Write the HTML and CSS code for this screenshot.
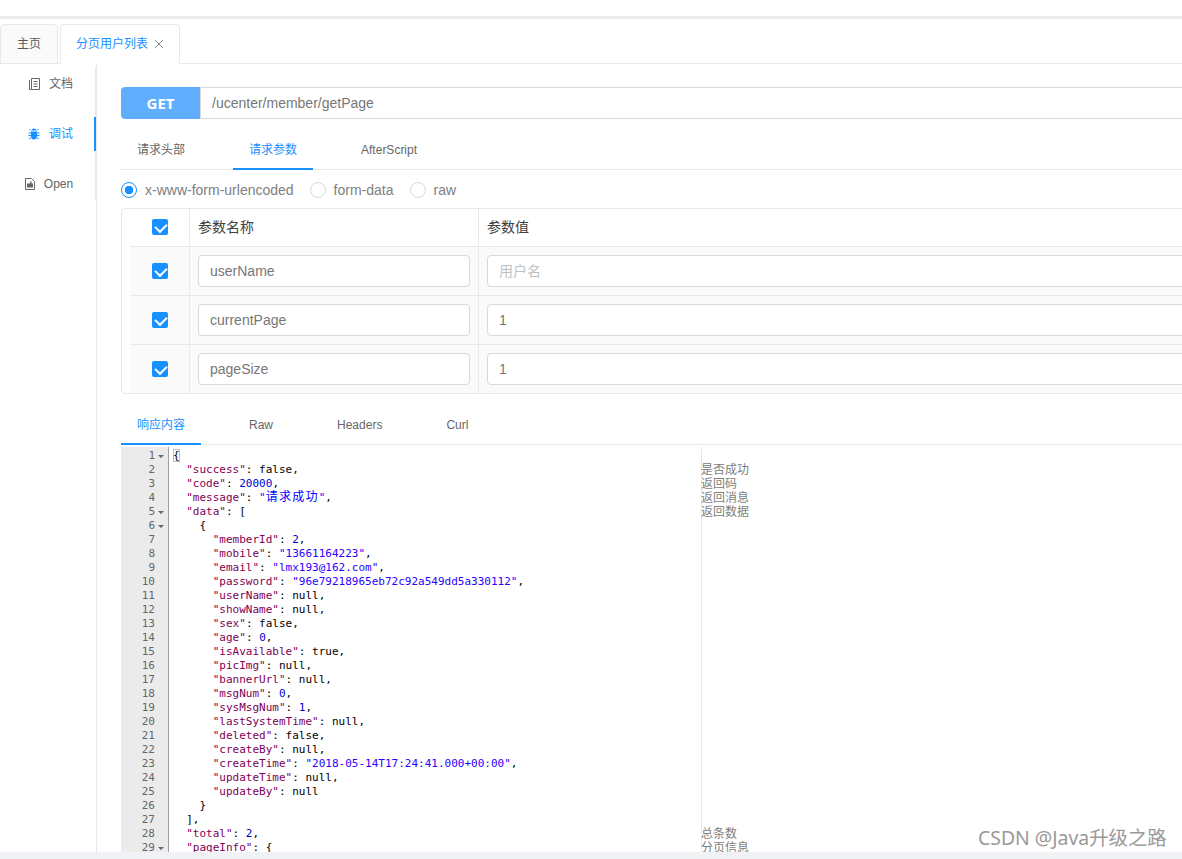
FILE: index.html
```html
<!DOCTYPE html>
<html lang="en">
<head>
  <meta charset="UTF-8">
  <title>分页用户列表</title>
  <link rel="stylesheet" href="styles.css">
</head>
<body>
  <div class="top-strip"></div>

  <div class="page-tabs">
    <div class="page-tab">主页</div>
    <div class="page-tab page-tab-active">分页用户列表
      <svg class="close-icon" width="10" height="10" viewBox="0 0 10 10"><path d="M1 1l8 8M9 1l-8 8" stroke="#8c8c8c" fill="none"/></svg>
    </div>
  </div>

  <div class="main">
    <div class="side">
      <div class="side-menu">
        <div class="side-item">
          <svg width="11" height="12" viewBox="0 0 11 12"><path d="M2.500.5h8v11h-8zM.5 2v9.500h2M4.500 3.500h4M4.500 6h4M4.500 8.500h4" stroke="#666" fill="none"/></svg>
          文档
        </div>
        <div class="side-item side-item-active">
          <svg width="12" height="12" viewBox="0 0 12 12"><path d="M3.500 2.500a2.500 2 0 0 1 5 0zM3 3.500h6V8a3 3.500 0 0 1-6 0z" fill="#1890ff"/><path d="M3 5H.5M3 7.500H.5M3 9.500l-2 1.500M9 5h2.500M9 7.500h2.500M9 9.500l2 1.500M3 2.500L1.500 1M9 2.500L10.500 1" stroke="#1890ff" fill="none"/></svg>
          调试
        </div>
        <div class="side-item side-item-open">
          <svg width="10" height="12" viewBox="0 0 10 12"><path d="M.5.5h6l3 3v8h-9z" stroke="#666" fill="none"/><path d="M2 5.500h3v-2h1.500v2H8v4H2z" fill="#666"/></svg>
          Open
        </div>
      </div>
    </div>

    <div class="content">
      <div class="url-bar">
        <div class="method">GET</div>
        <div class="url">/ucenter/member/getPage</div>
      </div>

      <div class="tabs">
        <div class="tab">请求头部</div>
        <div class="tab tab-active">请求参数</div>
        <div class="tab">AfterScript</div>
      </div>

      <div class="radios">
        <span class="radio radio-on"></span><span class="radio-label">x-www-form-urlencoded</span>
        <span class="radio"></span><span class="radio-label">form-data</span>
        <span class="radio"></span><span class="radio-label">raw</span>
      </div>

      <div class="params">
        <div class="row row-head">
          <div class="cell cell-check"><span class="check"></span></div>
          <div class="cell cell-name">参数名称</div>
          <div class="cell cell-value">参数值</div>
        </div>
        <div class="row">
          <div class="cell cell-check"><span class="check"></span></div>
          <div class="cell cell-name"><div class="field">userName</div></div>
          <div class="cell cell-value"><div class="field field-empty">用户名</div></div>
        </div>
        <div class="row">
          <div class="cell cell-check"><span class="check"></span></div>
          <div class="cell cell-name"><div class="field">currentPage</div></div>
          <div class="cell cell-value"><div class="field">1</div></div>
        </div>
        <div class="row">
          <div class="cell cell-check"><span class="check"></span></div>
          <div class="cell cell-name"><div class="field">pageSize</div></div>
          <div class="cell cell-value"><div class="field">1</div></div>
        </div>
      </div>

      <div class="tabs">
        <div class="tab tab-active">响应内容</div>
        <div class="tab">Raw</div>
        <div class="tab">Headers</div>
        <div class="tab">Curl</div>
      </div>

      <div class="editor">
        <div class="gutter">
          <div class="num fold">1</div>
          <div class="num">2</div>
          <div class="num">3</div>
          <div class="num">4</div>
          <div class="num fold">5</div>
          <div class="num fold">6</div>
          <div class="num">7</div>
          <div class="num">8</div>
          <div class="num">9</div>
          <div class="num">10</div>
          <div class="num">11</div>
          <div class="num">12</div>
          <div class="num">13</div>
          <div class="num">14</div>
          <div class="num">15</div>
          <div class="num">16</div>
          <div class="num">17</div>
          <div class="num">18</div>
          <div class="num">19</div>
          <div class="num">20</div>
          <div class="num">21</div>
          <div class="num">22</div>
          <div class="num">23</div>
          <div class="num">24</div>
          <div class="num">25</div>
          <div class="num">26</div>
          <div class="num">27</div>
          <div class="num">28</div>
          <div class="num fold">29</div>
        </div>
<pre class="code"><span class="brace">{</span>
  <i>"success"</i>: false,
  <i>"code"</i>: <b>20000</b>,
  <i>"message"</i>: <u>"<span class="wide">请求成功</span>"</u>,
  <i>"data"</i>: [
    {
      <i>"memberId"</i>: <b>2</b>,
      <i>"mobile"</i>: <u>"13661164223"</u>,
      <i>"email"</i>: <u>"lmx193@162.com"</u>,
      <i>"password"</i>: <u>"96e79218965eb72c92a549dd5a330112"</u>,
      <i>"userName"</i>: null,
      <i>"showName"</i>: null,
      <i>"sex"</i>: false,
      <i>"age"</i>: <b>0</b>,
      <i>"isAvailable"</i>: true,
      <i>"picImg"</i>: null,
      <i>"bannerUrl"</i>: null,
      <i>"msgNum"</i>: <b>0</b>,
      <i>"sysMsgNum"</i>: <b>1</b>,
      <i>"lastSystemTime"</i>: null,
      <i>"deleted"</i>: false,
      <i>"createBy"</i>: null,
      <i>"createTime"</i>: <u>"2018-05-14T17:24:41.000+00:00"</u>,
      <i>"updateTime"</i>: null,
      <i>"updateBy"</i>: null
    }
  ],
  <i>"total"</i>: <b>2</b>,
  <i>"pageInfo"</i>: {</pre>
        <div class="notes">
          <div class="note"></div>
          <div class="note">是否成功</div>
          <div class="note">返回码</div>
          <div class="note">返回消息</div>
          <div class="note">返回数据</div>
          <div class="note-gap"></div>
          <div class="note">总条数</div>
          <div class="note">分页信息</div>
        </div>
      </div>
    </div>
  </div>

  <div class="bottom-strip"></div>
  <div class="watermark">CSDN @Java升级之路</div>
</body>
</html>
```
FILE: styles.css
```css
* {
  box-sizing: border-box;
}

body {
  margin: 0;
  width: 1182px;
  height: 859px;
  overflow: hidden;
  position: relative;
  display: flex;
  flex-direction: column;
  background: #fff;
  color: #666;
  font-family: "Liberation Sans", "Noto Sans CJK SC", sans-serif;
  font-size: 12px;
  line-height: 16px;
}

.top-strip {
  height: 19px;
  flex: none;
  border-top: 16px solid #fff;
  background: #e9ebef;
}

.page-tabs {
  height: 45px;
  flex: none;
  display: flex;
  align-items: flex-end;
  gap: 2px;
  padding-top: 5px;
  border-bottom: 1px solid #e8e8e8;
}

.page-tab {
  height: 40px;
  width: 58px;
  margin-bottom: -1px;
  display: flex;
  align-items: center;
  justify-content: center;
  gap: 6px;
  background: #fafafa;
  border: 1px solid #e8e8e8;
  border-radius: 4px 4px 0 0;
  color: #595959;
}

.page-tab-active {
  width: 120px;
  background: #fff;
  border-bottom-color: #fff;
  color: #1890ff;
}

.main {
  flex: 1;
  min-height: 0;
  display: flex;
  overflow: hidden;
}

.side {
  width: 97px;
  flex: none;
  padding-top: 3px;
  border-right: 1px solid #e8e8e8;
}

.side-menu {
  width: 96px;
  height: 133px;
  display: flex;
  flex-direction: column;
  gap: 16px;
  border-right: 1px solid #e8e8e8;
}

.side-item {
  height: 34px;
  flex: none;
  display: flex;
  align-items: center;
  justify-content: center;
  gap: 9px;
  padding-left: 7px;
}

.side-item-active {
  width: 96px;
  color: #1890ff;
  border-right: 2px solid #1890ff;
}

.side-item-open {
  padding-left: 3px;
}

.content {
  width: 1200px;
  flex: none;
  padding: 23px 0 0 24px;
}

.url-bar {
  display: flex;
  height: 32px;
}

.method {
  width: 79px;
  display: flex;
  align-items: center;
  justify-content: center;
  background: #61aeff;
  border-radius: 4px 0 0 4px;
  color: #fff;
  font-family: "Open Sans", "Liberation Sans", sans-serif;
  font-size: 15px;
  font-weight: 700;
}

.url {
  flex: 1;
  display: flex;
  align-items: center;
  padding-left: 11px;
  border: 1px solid #d9d9d9;
  color: #777;
  font-size: 14px;
}

.tabs {
  height: 51px;
  display: flex;
  gap: 32px;
  border-bottom: 1px solid #e8e8e8;
}

.tab {
  height: 51px;
  padding: 23px 16px 0;
}

.tab-active {
  color: #1890ff;
  border-bottom: 2px solid #1890ff;
}

.radios {
  height: 38px;
  padding-top: 2px;
  display: flex;
  align-items: center;
  font-size: 14px;
  color: #808080;
}

.radio {
  width: 16px;
  height: 16px;
  border: 1px solid #d9d9d9;
  border-radius: 50%;
  margin-right: 8px;
  flex: none;
}

.radio-on {
  border-color: #1890ff;
  background: radial-gradient(circle, #1890ff 0 4px, #fff 4.500px);
}

.radio-label {
  margin-right: 16px;
}

.params {
  height: 186px;
  border: 1px solid #e8e8e8;
  border-radius: 4px;
  padding-left: 8px;
}

.row {
  height: 49px;
  display: flex;
  background: #fafafa;
  border-top: 1px solid #e8e8e8;
}

.row-head {
  height: 37px;
  padding-bottom: 1px;
  border-top: 0;
  background: #fff;
}

.cell {
  display: flex;
  align-items: center;
  padding: 0 8px;
  border-right: 1px solid #e8e8e8;
}

.cell-check {
  width: 60px;
  justify-content: center;
  padding: 0;
}

.cell-name {
  width: 289px;
}

.cell-value {
  flex: 1;
  border-right: 0;
}

.row-head .cell {
  color: #404040;
  font-size: 14px;
}

.check {
  width: 16px;
  height: 16px;
  position: relative;
  background: #1890ff;
  border-radius: 2px;
}

.check::after {
  content: "";
  position: absolute;
  left: 5px;
  top: 2px;
  width: 6px;
  height: 9px;
  border: 2px solid #fff;
  border-top: 0;
  border-left: 0;
  transform: rotate(45deg);
}

.field {
  width: 100%;
  height: 32px;
  display: flex;
  align-items: center;
  padding-left: 11px;
  background: #fff;
  border: 1px solid #d9d9d9;
  border-radius: 4px;
  color: #777;
  font-size: 14px;
}

.field-empty {
  color: #bfbfbf;
}

.editor {
  height: 405px;
  margin-top: 2px;
  display: flex;
  overflow: hidden;
  line-height: 14px;
}

.gutter {
  width: 48px;
  flex: none;
  padding-top: 2px;
  background: #ebebeb;
  border-right: 1px solid #9f9f9f;
  color: #666;
  font-family: "DejaVu Sans Mono", monospace;
  font-size: 11px;
}

.num {
  height: 14px;
  padding-right: 13px;
  text-align: right;
  position: relative;
}

.fold::after {
  content: "";
  position: absolute;
  right: 4px;
  top: 6px;
  border: 3px solid transparent;
  border-top: 3px solid #666;
  border-bottom: 0;
}

.code {
  width: 533px;
  flex: none;
  margin: 0;
  padding: 2px 0 0 4px;
  border-right: 1px solid #e8e8e8;
  color: #000;
  font-family: "DejaVu Sans Mono", "Noto Sans CJK SC", monospace;
  font-size: 11px;
  line-height: 14px;
}

.code i {
  font-style: normal;
  color: #7f0055;
}

.code b {
  font-weight: 400;
  color: #0000cd;
}

.code u {
  text-decoration: none;
  color: #2a00ff;
}

/* cjk takes two monospace cells in the editor */
.wide {
  font-size: 12px;
  line-height: 0;
  letter-spacing: 1.240px;
  color: #00f;
}

.brace {
  box-shadow: inset 0 0 0 1px #bfbfbf;
}

.notes {
  padding-top: 2px;
  margin-left: -1px;
  color: #808080;
}

.note {
  height: 14px;
}

.note-gap {
  height: 308px;
}

.bottom-strip {
  height: 7px;
  flex: none;
  background: #f0f2f5;
}

.watermark {
  position: absolute;
  left: 978px;
  top: 827px;
  color: #999;
  font-family: "Noto Sans", "Noto Sans CJK SC", sans-serif;
  font-size: 19.400px;
  line-height: 22px;
  white-space: nowrap;
}
```
